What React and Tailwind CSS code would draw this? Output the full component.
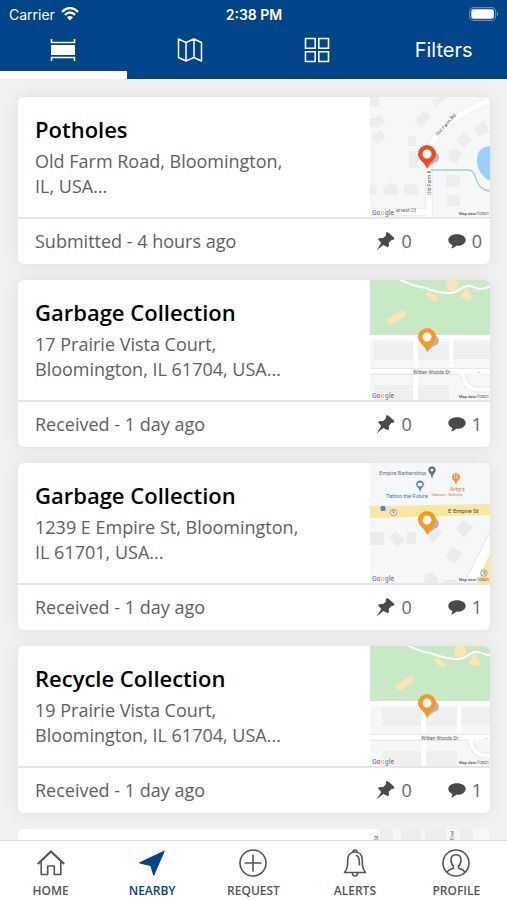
const REPORTS = [
  { id: 1, title: 'Potholes', address: 'Old Farm Road, Bloomington, IL, USA...', status: 'Submitted - 4 hours ago', pins: 0, comments: 0, map: FarmRoadMap },
  { id: 2, title: 'Garbage Collection', address: '17 Prairie Vista Court, Bloomington, IL 61704, USA...', status: 'Received - 1 day ago', pins: 0, comments: 1, map: PrairieMap },
  { id: 3, title: 'Garbage Collection', address: '1239 E Empire St, Bloomington, IL 61701, USA...', status: 'Received - 1 day ago', pins: 0, comments: 1, map: EmpireMap },
  { id: 4, title: 'Recycle Collection', address: '19 Prairie Vista Court, Bloomington, IL 61704, USA...', status: 'Received - 1 day ago', pins: 0, comments: 1, map: PrairieEastMap }
]

const NAV = [
  { label: 'HOME', icon: HomeIcon },
  { label: 'NEARBY', icon: NearbyIcon, active: true },
  { label: 'REQUEST', icon: RequestIcon },
  { label: 'ALERTS', icon: BellIcon },
  { label: 'PROFILE', icon: ProfileIcon }
]

const TABS = [
  { label: 'List view', icon: ListIcon, active: true },
  { label: 'Map view', icon: MapIcon },
  { label: 'Grid view', icon: GridIcon }
]

/* ---------- icons ---------- */

function ListIcon() {
  return (
    <svg width="26" height="24" viewBox="0 0 26 24" fill="none" stroke="currentColor" strokeWidth="1.6">
      <path d="M1.500 1V4.500H24.500V1M1.500 23V19.500H24.500V23" />
      <path d="M1 7H25V17H1Z" fill="currentColor" stroke="none" />
    </svg>
  )
}

function MapIcon() {
  return (
    <svg width="26" height="24" viewBox="0 0 26 24" fill="none" stroke="currentColor" strokeWidth="1.5" strokeLinejoin="round">
      <path d="M1.500 1L9 4.500L17 1L24.500 4.500V23L17 19.500L9 23L1.500 19.500ZM9 4.500V23M17 1V19.500" />
    </svg>
  )
}

function GridIcon() {
  return (
    <svg width="26" height="26" viewBox="0 0 26 26" fill="none" stroke="currentColor" strokeWidth="1.6">
      <path d="M1.500 1.500h9.700v9.700H1.500ZM14.800 1.500h9.700v9.700h-9.700ZM1.500 14.800h9.700v9.700H1.500ZM14.800 14.800h9.700v9.700h-9.700Z" />
    </svg>
  )
}

function WifiIcon() {
  return (
    <svg width="18" height="14" viewBox="0 0 18 14" fill="none" stroke="currentColor" strokeWidth="2.4">
      <path d="M1 4.800Q9-2.600 17 4.800M3.900 7.900Q9 3.300 14.100 7.900" />
      <path d="M9 13.600L5.900 10.300Q9 7.800 12.100 10.300Z" fill="currentColor" stroke="none" />
    </svg>
  )
}

function BatteryIcon() {
  return (
    <svg width="30" height="14" viewBox="0 0 30 14">
      <rect x="0.6" y="0.6" width="26" height="12.8" rx="4" fill="none" stroke="#fff" strokeOpacity="0.4" strokeWidth="1.1" />
      <rect x="2.3" y="2.3" width="22.6" height="9.4" rx="2" fill="#fff" />
      <path d="M28 4.800Q30 7 28 9.200Z" fill="#fff" fillOpacity="0.5" />
    </svg>
  )
}

function PinIcon() {
  return (
    <svg width="19" height="19" viewBox="0 0 19 19" fill="currentColor">
      <path d="M10.300 .6C11.100 -.1 12 .4 12.800 1L17.600 5.300C18.600 6.300 18.600 7.300 17.500 7.800C16.700 8 16.200 7.800 15.500 7.900L12.700 11.100C13.300 12.700 12.900 14.300 12 15.200L7.200 12.900L.6 18.600L5.200 11L1.900 7.100C3.400 5.800 5.200 5.600 6.900 6.200L9.900 3.400C10 2.500 9.600 1.600 10.300 .6Z" />
    </svg>
  )
}

function CommentIcon() {
  return (
    <svg width="18" height="15" viewBox="0 0 18 15" fill="currentColor">
      <path d="M9 .3C4.100 .3 .3 2.600 .3 6C.3 8.300 1.800 10 4.300 11C4.400 12.500 3.800 13.600 2.900 14.400C5.300 14.200 7 13.200 8.100 11.800C13.600 12 17.700 9.600 17.700 6C17.700 2.600 13.900 .3 9 .3Z" />
    </svg>
  )
}

function HomeIcon() {
  return (
    <svg width="28" height="28" viewBox="0 0 28 28" fill="none" stroke="currentColor" strokeWidth="1.6" strokeLinejoin="round">
      <path d="M.8 15L14 2.500L27.200 15" strokeWidth="2.200" />
      <path d="M4.200 13V25.500H10.700V17H17.300V25.500H23.800V13" />
    </svg>
  )
}

function NearbyIcon() {
  return (
    <svg width="28" height="28" viewBox="0 0 28 28" fill="currentColor">
      <path d="M26 1.800Q26.800 1.400 26.600 2.400L16.400 26Q15.700 27.200 15.100 26L12.400 17.100L1.600 14.400Q.7 13.800 1.700 13.200Z" />
    </svg>
  )
}

function RequestIcon() {
  return (
    <svg width="28" height="28" viewBox="0 0 28 28" fill="none" stroke="currentColor" strokeWidth="1.6">
      <circle cx="14" cy="14" r="13" />
      <path d="M14 5.500V22.500M5.500 14H22.500" />
    </svg>
  )
}

function BellIcon() {
  return (
    <svg width="28" height="28" viewBox="0 0 28 28" fill="none" stroke="currentColor" strokeWidth="1.6" strokeLinejoin="round">
      <path d="M3.500 23.500C5.200 21.400 6.200 19.600 6.400 17L6.800 10C7.100 5.800 10 3 14 3S20.900 5.800 21.200 10L21.600 17C21.800 19.600 22.800 21.400 24.500 23.500Z" />
      <path d="M12 3C12 .3 16 .3 16 3M11.400 24C11.400 28 16.600 28 16.600 24M14.800 6.200C17.200 6.800 18 8.600 18.200 11L18.500 16.500" />
    </svg>
  )
}

function ProfileIcon() {
  return (
    <svg width="28" height="28" viewBox="0 0 28 28" fill="none" stroke="currentColor" strokeWidth="1.6">
      <circle cx="14" cy="14" r="13" />
      <path d="M5.200 23.300C6.200 20.600 8.400 20.600 11.400 19.200V17C9.400 15.500 9 13.500 9 11C9 7.600 11 5.800 14 5.800S19 7.600 19 11C19 13.500 18.600 15.500 16.600 17V19.200C19.600 20.600 21.800 20.600 22.800 23.300" />
    </svg>
  )
}

/* ---------- map thumbnails ---------- */

function MapTile({ children, pinColor }) {
  return (
    <svg viewBox="0 0 120 120" className="h-[120px] w-[120px] shrink-0 font-['Roboto',sans-serif]" role="img" aria-label="Map">
      <rect width="120" height="120" fill="#f5f7f8" />
      {children}
      <path d="M57 72Q64 65 68 64Q71 58 65 55L57 60Z" fill="#777" opacity="0.5" />
      <path d="M57 72C55 65 48 63 48 57A9 9 0 0 1 66 57C66 63 59 65 57 72Z" fill={pinColor} />
      <circle cx="57" cy="57" r="4.500" fill="#fff" />
      <text x="2" y="118" fontSize="7" fontWeight="500" stroke="#fff" strokeWidth="1" paintOrder="stroke">
        <tspan fill="#4285f4">G</tspan>
        <tspan fill="#ea4335">o</tspan>
        <tspan fill="#fbbc05">o</tspan>
        <tspan fill="#4285f4">g</tspan>
        <tspan fill="#34a853">l</tspan>
        <tspan fill="#ea4335">e</tspan>
      </text>
      <text x="119" y="118" textAnchor="end" fontSize="4" fill="#222">Map data ©2021</text>
    </svg>
  )
}

function FarmRoadMap() {
  return (
    <MapTile pinColor="#f04923">
      <path d="M0 0H9V9H0ZM0 22L10 18L15 25L7 31L0 29ZM3 38L10 33L16 40L8 47L2 44ZM45 24L54 13L61 20L51 31ZM38 39H46V49H38ZM39 54H48V71H39ZM62 4L70 0H77L66 10ZM86 44L94 35L102 43L94 52ZM104 31L114 23L119 35L109 39ZM78 54L86 51L92 57L86 67L79 63ZM76 78H90V90H76ZM77 98H90V109H77ZM0 89L6 87V98H0ZM13 90L21 86L28 89V98H13ZM34 89L42 86L48 90V98H34Z" fill="#ebedee" />
      <path d="M59 120V58Q62 38 80 25Q94 14 124 1M0 115H59" fill="none" stroke="#e3e7e9" strokeWidth="7" />
      <path d="M59 120V58Q62 38 80 25Q94 14 124 1M0 115H59" fill="none" stroke="#fff" strokeWidth="6" />
      <path d="M120 49Q106 50 107 65Q108 78 120 84Z" fill="#9bd1f9" />
      <path d="M61 73H98Q104 73 106 82Q109 93 120 94" fill="none" stroke="#a3d2bd" strokeWidth="1.300" />
      <text transform="translate(68 39) rotate(-48)" fontSize="5" fill="#555">Old Farm Rd</text>
      <text transform="translate(61 98) rotate(-90)" fontSize="5" fill="#555">Old Farm R</text>
      <text x="26" y="115" fontSize="5" fill="#666">arvest Ct</text>
    </MapTile>
  )
}

function PrairieScene({ shift = 0 }) {
  return (
    <>
      <path d="M0 0H120V55H0Z" fill="#c7e9c6" />
      <g transform={`translate(${shift} 0)`}>
        <path d="M17 39L27 33Q33 28 36 32Q37 37 30 39Q25 45 20 44Q16 42 17 39ZM56 13Q61 10 65 16Q70 20 66 21Q58 20 56 13ZM76 3Q80-3 86 0Q91 8 85 11Q78 12 76 7ZM90 17L96 7L100 13Q104 20 98 20Z" fill="#fbe5b4" />
        <path d="M27-2Q39 5 55 8Q80 17 89 10Q97 3 106 8Q112 11 126 4" fill="none" stroke="#fff" strokeWidth="2" />
        <path d="M4 62H43V80H4ZM48 62H79V80H48ZM83 62H122V79H83ZM4 105H43V120H4ZM48 105H79V120H48Z" fill="#eeefef" />
        <path d="M-20 57H122M-20 91H122M46 57V87M81 57V87M46 92V120M92 93Q94 109 108 110H124" fill="none" stroke="#fff" strokeWidth="4" />
        <path d="M-20 88.500H122M-20 94.500H90Q93 112 108 112H124M96 95Q98 107 108 107H124" fill="none" stroke="#e1e5ea" strokeWidth="0.800" />
        <text x="43" y="94" fontSize="5" fill="#555">Witten Woods Dr</text>
        <text x="106" y="93" fontSize="5" fill="#777">←</text>
      </g>
    </>
  )
}

function PrairieMap() {
  return (
    <MapTile pinColor="#f8991d">
      <PrairieScene />
    </MapTile>
  )
}

function PrairieEastMap() {
  return (
    <MapTile pinColor="#f8991d">
      <PrairieScene shift={8} />
    </MapTile>
  )
}

function EmpireMap() {
  return (
    <MapTile pinColor="#f8991d">
      <path d="M0 69H14V82H0ZM19 74L25 69L35 76L27 84ZM37 69H46V81H37ZM55 67L66 62L72 70L62 80ZM86 66L94 57L103 64L94 75ZM76 94L82 84L93 90L85 101ZM55 112L62 109L68 115V120H54ZM74 117H86V120H74Z" fill="#ebebec" />
      <path d="M120 68Q110 89 94 120H110Q116 103 120 98Z" fill="#fff" stroke="#dcdfe3" strokeWidth="0.800" />
      <path d="M107 120Q114 102 120 91V120Z" fill="#fbe69d" />
      <path d="M0 44L120 42V52L0 55Z" fill="#fbe69d" />
      <path d="M0 43.500L120 41.500" stroke="#ece2bb" strokeWidth="0.800" />
      <text x="56" y="12" textAnchor="end" fontSize="5.500" fill="#60737c">Empire Barbershop</text>
      <text x="16" y="35" fontSize="5.500" fill="#2f75e8">Tattoo the Future</text>
      <text x="80" y="28" fontSize="5.500" fill="#d9742a">Arby's</text>
      <text x="61" y="33" fontSize="4" fill="#d9742a">Takeout • Delivery</text>
      <text x="78" y="50" fontSize="6" fill="#444">E Empire St</text>
      <path d="M62 16Q61 11 58.500 8.500A3.800 3.800 0 1 1 65.500 8.500Q63 11 62 16Z" fill="#5e7884" />
      <path d="M50 29Q49 25 46.500 23A3.900 3.900 0 1 1 53.500 23Q51 25 50 29Z" fill="#3d7ff0" />
      <path d="M86 22Q85 18 82.500 16A4 4 0 1 1 89.500 16Q87 18 86 22Z" fill="#f19a2b" />
      <circle cx="62" cy="7" r="1.300" fill="#fff" />
      <path d="M48 20H52V23H48ZM84.500 11V16M87 11V16" fill="#fff" stroke="#fff" strokeWidth="0.600" />
      <rect x="10.500" y="43" width="5" height="5" rx="1.500" fill="#4685e8" />
      <circle cx="23.500" cy="49.500" r="3.200" fill="#fff" stroke="#777" strokeWidth="0.700" />
      <text x="22" y="51" fontSize="5" fill="#444">9</text>
      <circle cx="114" cy="110" r="3.200" fill="#fff" stroke="#777" strokeWidth="0.700" />
      <text x="113" y="112" fontSize="5" fill="#444">9</text>
    </MapTile>
  )
}

/* ---------- page ---------- */

function StatusBar() {
  return (
    <div className="grid h-7 grid-cols-3 items-center pr-2 pl-[9px] font-['Inter',sans-serif] text-[14px]">
      <span className="flex items-center gap-1.5">
        Carrier
        <WifiIcon />
      </span>
      <span className="text-center font-semibold">2:38 PM</span>
      <span className="flex justify-end">
        <BatteryIcon />
      </span>
    </div>
  )
}

function Header() {
  return (
    <header className="shrink-0 bg-[#004489] text-white">
      <StatusBar />
      <div className="grid h-[51px] grid-cols-4">
        {TABS.map(({ label, icon: Icon, active }) => (
          <button
            key={label}
            type="button"
            aria-label={label}
            className={`flex items-center justify-center border-b-8 ${active ? 'border-white' : 'border-transparent'}`}
          >
            <Icon />
          </button>
        ))}
        <button type="button" className="border-b-8 border-transparent font-['Inter',sans-serif] text-[20px] leading-7">
          Filters
        </button>
      </div>
    </header>
  )
}

function ReportCard({ report }) {
  const Thumb = report.map
  return (
    <article className="shrink-0 overflow-hidden rounded-md bg-white shadow-[0_0_16px_rgba(0,0,0,0.08)]">
      <div className="flex justify-between">
        <div className="pt-4 pl-[17px]">
          <h2 className="text-[22px] leading-8 font-semibold text-black">{report.title}</h2>
          <p className="mt-1 max-w-[268px] text-[18px] leading-[25px]">{report.address}</p>
        </div>
        <Thumb />
      </div>
      <div className="flex h-[47px] items-center border-t-2 border-[#e6e6e6] pr-2 pl-[17px] text-[18px]">
        <p className="flex-1">{report.status}</p>
        <div className="flex gap-9">
          <span className="flex items-center gap-1.5 text-[#4a4a4a]">
            <PinIcon />
            <span className="text-[#666]">{report.pins}</span>
          </span>
          <span className="flex items-center gap-1.5 text-[#4a4a4a]">
            <CommentIcon />
            <span className="text-[#666]">{report.comments}</span>
          </span>
        </div>
      </div>
    </article>
  )
}

// top edge of the next card, still below the fold
function NextCard() {
  return (
    <article className="flex shrink-0 justify-end overflow-hidden rounded-t-md bg-white">
      <svg viewBox="0 0 120 12" className="h-3 w-[120px] font-['Roboto',sans-serif]" role="img" aria-label="Map">
        <rect width="120" height="12" fill="#f5f7f8" />
        <path d="M10 0H23V12H10ZM31 0H51V12H31ZM55 0H76V12H55ZM90 0H103V12H90Z" fill="#ebedee" />
        <path d="M4 0V12M82 0V12" stroke="#fff" strokeWidth="5" />
        <text transform="translate(8 11) rotate(-90)" fontSize="5" fill="#555">St</text>
        <text transform="translate(84 11) rotate(-90)" fontSize="5" fill="#555">Evel</text>
      </svg>
    </article>
  )
}

function BottomNav() {
  return (
    <nav className="grid h-[60px] shrink-0 grid-cols-5 border-t border-[#dcdcdc] bg-white">
      {NAV.map(({ label, icon: Icon, active }) => (
        <a
          key={label}
          href={`#${label.toLowerCase()}`}
          className={`flex flex-col items-center gap-1.5 pt-2 text-[12px] leading-4 font-semibold ${active ? 'text-[#004489]' : 'text-[#555]'}`}
        >
          <Icon />
          {label}
        </a>
      ))}
    </nav>
  )
}

export default function App() {
  return (
    <div className="flex h-screen flex-col overflow-hidden bg-[#f1f1f1] font-['Open_Sans',sans-serif] text-[#606060]">
      <Header />
      <main className="flex min-h-0 flex-1 flex-col gap-4 overflow-hidden pt-[18px] pr-[17px] pl-[18px]">
        {REPORTS.map((report) => (
          <ReportCard key={report.id} report={report} />
        ))}
        <NextCard />
      </main>
      <BottomNav />
    </div>
  )
}
